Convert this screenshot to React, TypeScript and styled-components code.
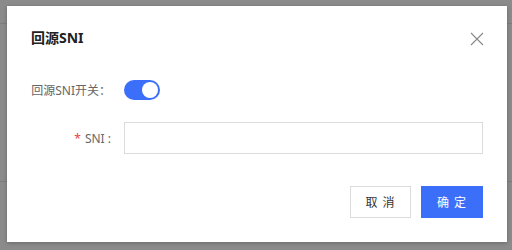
import React, { useState } from 'react';
import styled, { createGlobalStyle } from 'styled-components';

const GlobalStyle = createGlobalStyle`
  html, body {
    margin: 0;
    padding: 0;
    background: #8b8b8b;
  }
  body {
    font-family: "Noto Sans", "Noto Sans CJK SC", sans-serif;
    -webkit-font-smoothing: antialiased;
  }
`;

const Screen = styled.div`
  position: relative;
  width: 512px;
  height: 250px;
  overflow: hidden;
  background: #8b8b8b;
`;

const PageHeader = styled.div`
  height: 23px;
  border-bottom: 1px solid #7e7e7e;
`;

const PageBody = styled.div`
  height: 157px;
  border-bottom: 1px solid #7e7e7e;
`;

const Mask = styled.div`
  position: absolute;
  inset: 0;
  padding: 6px 5px 8px 7px;
`;

const Modal = styled.div`
  width: 500px;
  height: 236px;
  box-sizing: border-box;
  background: #fff;
  box-shadow: 0 1px 4px rgba(0, 0, 0, 0.25);
  padding: 22px 24px 24px 24px;
  display: flex;
  flex-direction: column;
`;

const Header = styled.div`
  display: flex;
  align-items: center;
  justify-content: space-between;
  height: 20px;
`;

const Title = styled.h3`
  margin: 0;
  font-size: 14px;
  font-weight: 700;
  line-height: 20px;
  color: #222;
`;

const CloseButton = styled.button`
  border: 0;
  background: none;
  padding: 0;
  width: 14px;
  height: 14px;
  display: flex;
  cursor: pointer;
  margin-right: -1px;
  margin-top: 2px;
`;

const Form = styled.div`
  display: flex;
  flex-direction: column;
  gap: 16px;
  margin-top: 26px;
`;

const Row = styled.div`
  display: flex;
  align-items: center;
  height: 32px;
`;

const Label = styled.label`
  width: 93px;
  flex: none;
  box-sizing: border-box;
  padding-right: 13px;
  text-align: right;
  font-size: 12px;
  color: #666;
  white-space: nowrap;
`;

const Required = styled.span`
  color: #e54545;
  margin-right: 4px;
`;

const SwitchTrack = styled.button<{ $on: boolean }>`
  width: 36px;
  height: 20px;
  border: 0;
  padding: 2px;
  border-radius: 10px;
  background: ${p => (p.$on ? '#3c6ff9' : '#bbb')};
  display: flex;
  justify-content: ${p => (p.$on ? 'flex-end' : 'flex-start')};
  cursor: pointer;
`;

const SwitchKnob = styled.span`
  width: 16px;
  height: 16px;
  border-radius: 50%;
  background: #fff;
`;

const Input = styled.input`
  flex: 1;
  height: 32px;
  box-sizing: border-box;
  border: 1px solid #dcdcdc;
  outline: none;
  padding: 0 10px;
  font-size: 12px;
  font-family: inherit;
`;

const Footer = styled.div`
  margin-top: auto;
  display: flex;
  justify-content: flex-end;
  gap: 10px;
`;

const Button = styled.button<{ $primary?: boolean }>`
  height: 32px;
  width: ${p => (p.$primary ? '62px' : '61px')};
  padding: 0;
  font-size: 12px;
  font-family: inherit;
  letter-spacing: 1px;
  border: 1px solid ${p => (p.$primary ? '#3c6ff9' : '#dcdcdc')};
  background: ${p => (p.$primary ? '#3c6ff9' : '#fff')};
  color: ${p => (p.$primary ? '#fff' : '#333')};
  cursor: pointer;
`;

export default function App() {
  const [on, setOn] = useState(true);
  return (
    <Screen>
      <GlobalStyle />
      <PageHeader />
      <PageBody />
      <Mask>
        <Modal>
          <Header>
            <Title>回源SNI</Title>
            <CloseButton aria-label="close">
              <svg width="14" height="14" viewBox="0 0 14 14">
                <path d="M1 1L13 13M13 1L1 13" stroke="#888" strokeWidth="1.1" fill="none" />
              </svg>
            </CloseButton>
          </Header>
          <Form>
            <Row>
              <Label>回源SNI开关：</Label>
              <SwitchTrack $on={on} onClick={() => setOn(!on)}>
                <SwitchKnob />
              </SwitchTrack>
            </Row>
            <Row>
              <Label>
                <Required>*</Required>SNI :
              </Label>
              <Input />
            </Row>
          </Form>
          <Footer>
            <Button>取 消</Button>
            <Button $primary>确 定</Button>
          </Footer>
        </Modal>
      </Mask>
    </Screen>
  );
}
